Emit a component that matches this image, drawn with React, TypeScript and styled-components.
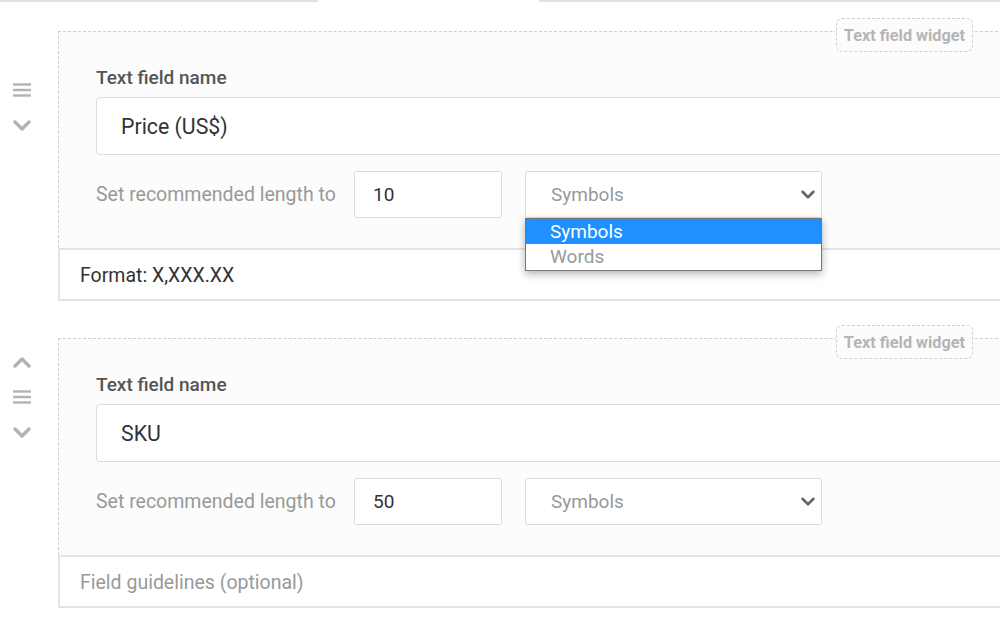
import React from "react";
import styled, { createGlobalStyle } from "styled-components";

const Global = createGlobalStyle`
  html, body { margin: 0; padding: 0; background: #ffffff; overflow: hidden; }
  body { font-family: Roboto, "Noto Sans", Arial, sans-serif; width: 1000px; height: 629px; }
`;

const Page = styled.div`
  width: 1000px;
  height: 629px;
  overflow: hidden;
  display: flex;
  flex-direction: column;
`;

const TopRule = styled.div`
  display: flex;
  height: 2px;
  gap: 221px;
`;

const RuleSegment = styled.div<{ $w: number }>`
  width: ${(p) => p.$w}px;
  height: 2px;
  background: #e2e2e2;
`;

const List = styled.div`
  display: flex;
  flex-direction: column;
  gap: 37px;
  padding-top: 29px;
`;

const Item = styled.div`
  display: flex;
  align-items: flex-start;
  gap: 14px;
`;

const Handles = styled.div`
  width: 44px;
  flex: 0 0 44px;
  display: flex;
  flex-direction: column;
  align-items: center;
  padding-top: 17px;
  gap: 21px;
`;

const HandleSlot = styled.div`
  width: 20px;
  height: 14px;
  display: flex;
  align-items: center;
  justify-content: center;
  color: #b3b3b3;
`;

const Card = styled.div`
  width: 1000px;
  flex: 0 0 1000px;
  display: flex;
  flex-direction: column;
`;

const CardBody = styled.div`
  position: relative;
  background: #fcfcfc;
  border-top: 1px dashed #cfcfcf;
  border-left: 1px dashed #cfcfcf;
  padding: 34px 0 30px 37px;
  display: flex;
  flex-direction: column;
`;

const Badge = styled.div`
  position: absolute;
  top: -14px;
  left: 777px;
  width: 137px;
  height: 34px;
  box-sizing: border-box;
  border: 1px dashed #d0d0d0;
  border-radius: 6px;
  background: #fcfcfc;
  display: flex;
  align-items: center;
  justify-content: center;
  font-size: 16.3px;
  font-weight: 700;
  color: #b5b5b5;
`;

const FieldLabel = styled.div`
  font-size: 19px;
  font-weight: 500;
  color: #555555;
  line-height: 24px;
`;

const NameInput = styled.div`
  margin-top: 7px;
  height: 58px;
  box-sizing: border-box;
  border: 1px solid #dcdcdc;
  border-radius: 4px;
  background: #ffffff;
  display: flex;
  align-items: center;
  padding-left: 24px;
  font-size: 21.3px;
  color: #333333;
`;

const LengthRow = styled.div`
  margin-top: 16px;
  display: flex;
  align-items: center;
`;

const RowLabel = styled.div`
  width: 258px;
  font-size: 19.5px;
  color: #999999;
  white-space: nowrap;
`;

const NumberBox = styled.div`
  width: 148px;
  height: 47px;
  box-sizing: border-box;
  border: 1px solid #dcdcdc;
  border-radius: 2px;
  background: #ffffff;
  display: flex;
  align-items: center;
  padding-left: 18px;
  font-size: 19px;
  color: #333333;
`;

const SelectWrap = styled.div`
  position: relative;
  margin-left: 23px;
`;

const SelectBox = styled.div`
  width: 297px;
  height: 47px;
  box-sizing: border-box;
  border: 1px solid #dcdcdc;
  border-radius: 2px;
  background: #ffffff;
  display: flex;
  align-items: center;
  justify-content: space-between;
  padding: 0 6px 0 25px;
  font-size: 19px;
  color: #999999;
`;

const Menu = styled.div`
  position: absolute;
  top: 47px;
  left: 0;
  width: 297px;
  box-sizing: border-box;
  border: 1px solid #777777;
  background: #ffffff;
  box-shadow: 0 3px 8px rgba(0, 0, 0, 0.3);
  z-index: 5;
  padding-bottom: 1px;
`;

const Option = styled.div<{ $active?: boolean }>`
  height: 25px;
  display: flex;
  align-items: center;
  padding-left: 24px;
  font-size: 19px;
  background: ${(p) => (p.$active ? "#1e90ff" : "#ffffff")};
  color: ${(p) => (p.$active ? "#ffffff" : "#999999")};
`;

const CardFooter = styled.div<{ $muted?: boolean }>`
  height: 53px;
  box-sizing: border-box;
  border: 2px solid #e4e4e4;
  border-right: none;
  background: #ffffff;
  display: flex;
  align-items: center;
  padding: 2px 0 0 20px;
  font-size: 19.5px;
  color: ${(p) => (p.$muted ? "#999999" : "#333333")};
`;

const Hamburger = () => (
  <svg width="18" height="14" viewBox="0 0 18 14">
    <g stroke="currentColor" strokeWidth="2.4">
      <line x1="0" y1="1.5" x2="18" y2="1.5" />
      <line x1="0" y1="7" x2="18" y2="7" />
      <line x1="0" y1="12.5" x2="18" y2="12.5" />
    </g>
  </svg>
);

const Chevron = ({ up, color = "currentColor", w = 18 }: { up?: boolean; color?: string; w?: number }) => (
  <svg width={w} height={w / 2 + 2} viewBox="0 0 18 11">
    <polyline
      points={up ? "2,9 9,2 16,9" : "2,2 9,9 16,2"}
      fill="none"
      stroke={color}
      strokeWidth="3.4"
      strokeLinecap="round"
      strokeLinejoin="round"
    />
  </svg>
);

type Field = {
  name: string;
  length: string;
  footer: string;
  muted: boolean;
  open: boolean;
  first: boolean;
};

const fields: Field[] = [
  { name: "Price (US$)", length: "10", footer: "Format: X,XXX.XX", muted: false, open: true, first: true },
  { name: "SKU", length: "50", footer: "Field guidelines (optional)", muted: true, open: false, first: false },
];

export default function App() {
  return (
    <Page>
      <Global />
      <TopRule>
        <RuleSegment $w={318} />
        <RuleSegment $w={461} />
      </TopRule>
      <List>
        {fields.map((f) => (
          <Item key={f.name}>
            <Handles>
              <HandleSlot>{f.first ? null : <Chevron up />}</HandleSlot>
              <HandleSlot>
                <Hamburger />
              </HandleSlot>
              <HandleSlot>
                <Chevron />
              </HandleSlot>
            </Handles>
            <Card>
              <CardBody>
                <Badge>Text field widget</Badge>
                <FieldLabel>Text field name</FieldLabel>
                <NameInput>{f.name}</NameInput>
                <LengthRow>
                  <RowLabel>Set recommended length to</RowLabel>
                  <NumberBox>{f.length}</NumberBox>
                  <SelectWrap>
                    <SelectBox>
                      <span>Symbols</span>
                      <Chevron color="#666666" w={14} />
                    </SelectBox>
                    {f.open && (
                      <Menu>
                        <Option $active>Symbols</Option>
                        <Option>Words</Option>
                      </Menu>
                    )}
                  </SelectWrap>
                </LengthRow>
              </CardBody>
              <CardFooter $muted={f.muted}>{f.footer}</CardFooter>
            </Card>
          </Item>
        ))}
      </List>
    </Page>
  );
}
